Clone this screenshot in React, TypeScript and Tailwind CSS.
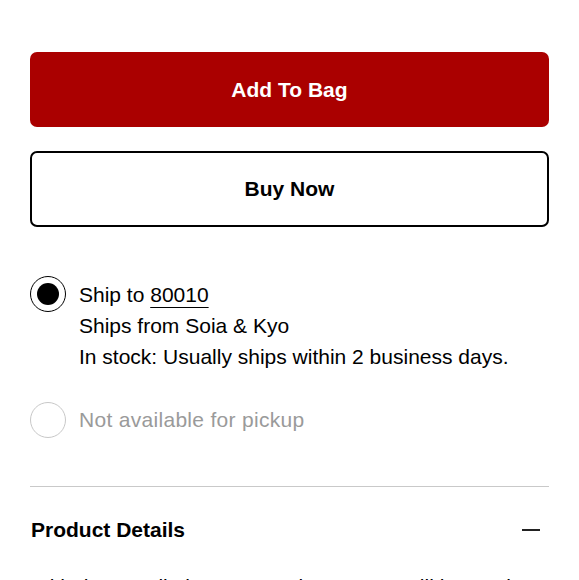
function Radio({ checked, disabled }: { checked?: boolean; disabled?: boolean }) {
  return (
    <span
      className={
        'flex h-[36px] w-[36px] shrink-0 items-center justify-center rounded-full border-[1.5px] ' +
        (disabled ? 'border-[#c8c8c8]' : 'border-black')
      }
    >
      {checked && <span className="h-[22px] w-[22px] rounded-full bg-black" />}
    </span>
  );
}

export default function App() {
  return (
    <div className="h-[580px] w-[579px] overflow-hidden bg-white px-[30px] pt-[52px] font-['Liberation_Sans',Arial,sans-serif] text-black">
      <button className="flex h-[75px] w-full items-center justify-center rounded-[7px] bg-[#aa0000] text-[21px] font-bold text-white">
        Add To Bag
      </button>
      <button className="mt-[24px] flex h-[76px] w-full items-center justify-center rounded-[7px] border-2 border-black bg-white text-[21px] font-bold text-black">
        Buy Now
      </button>

      <div className="mt-[49px] flex gap-[13px]">
        <Radio checked />
        <div className="pt-[3px] text-[21px] leading-[31px]">
          <div>
            Ship to <span className="underline decoration-1 underline-offset-[5px]">80010</span>
          </div>
          <div>Ships from Soia &amp; Kyo</div>
          <div>In stock: Usually ships within 2 business days.</div>
        </div>
      </div>

      <div className="mt-[30px] flex items-center gap-[13px]">
        <Radio disabled />
        <span className="text-[21px] tracking-[0.3px] text-[#9a9a9a]">Not available for pickup</span>
      </div>

      <div className="mt-[48px] h-px w-full bg-[#c9c9c9]" />

      <div className="flex h-[86px] items-center justify-between pl-px">
        <span className="text-[21px] font-bold">Product Details</span>
        <span className="mr-[9px] h-[2px] w-[18px] bg-[#222]" />
      </div>

      <p className="mt-[3px] text-[21px] leading-[21px]">
        With the Hoodie by SOIA and KYO, you will be ready for anything the season brings.
      </p>
    </div>
  );
}
